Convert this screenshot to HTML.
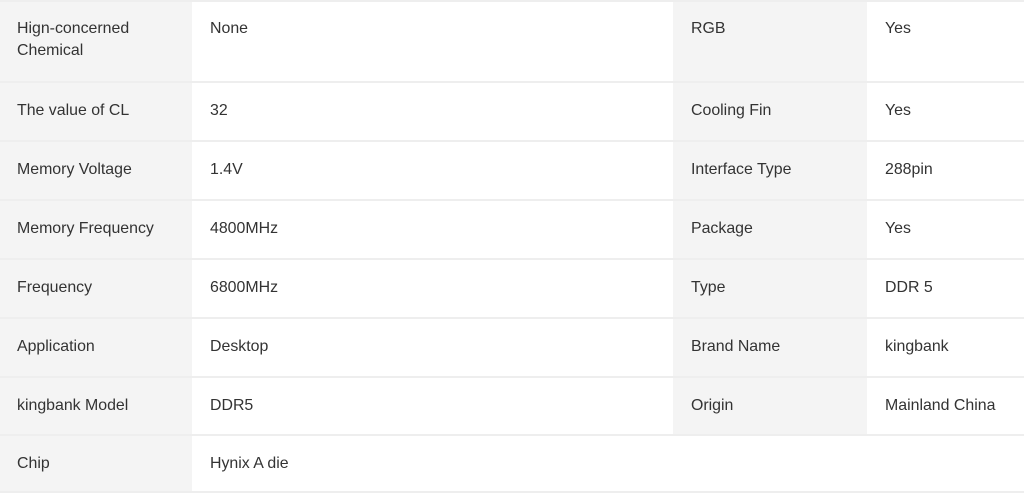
<!DOCTYPE html>
<html><head><style>
body{margin:0;background:#fff;font-family:"Liberation Sans",sans-serif;font-size:15.9px;color:#333}
.r{position:absolute;left:0;width:1024px;border-bottom:2px solid #eee;box-sizing:border-box}
.c{position:absolute;top:0;bottom:0;padding:17px 0 0 17px;line-height:22px;box-sizing:border-box}
.l{background:#f4f4f4}
.a{left:0;width:192px}.b{left:192px;width:481px;padding-left:18px}.cc{left:673px;width:194px;padding-left:18px}.d{left:867px;width:157px;padding-left:18px}
</style></head><body>
<div style="position:absolute;left:0;top:0;width:1024px;height:2px;background:#eee"></div>
<div class="r" style="top:2px;height:81px"><div class="c a l" style="padding-top:16px">Hign-concerned<br>Chemical</div><div class="c b" style="padding-top:16px">None</div><div class="c cc l" style="padding-top:16px">RGB</div><div class="c d" style="padding-top:16px">Yes</div></div>
<div class="r" style="top:83px;height:59px"><div class="c a l">The value of CL</div><div class="c b">32</div><div class="c cc l">Cooling Fin</div><div class="c d">Yes</div></div>
<div class="r" style="top:142px;height:59px"><div class="c a l">Memory Voltage</div><div class="c b">1.4V</div><div class="c cc l">Interface Type</div><div class="c d">288pin</div></div>
<div class="r" style="top:201px;height:59px"><div class="c a l">Memory Frequency</div><div class="c b">4800MHz</div><div class="c cc l">Package</div><div class="c d">Yes</div></div>
<div class="r" style="top:260px;height:59px"><div class="c a l">Frequency</div><div class="c b">6800MHz</div><div class="c cc l">Type</div><div class="c d">DDR 5</div></div>
<div class="r" style="top:319px;height:59px"><div class="c a l">Application</div><div class="c b">Desktop</div><div class="c cc l">Brand Name</div><div class="c d">kingbank</div></div>
<div class="r" style="top:378px;height:58px"><div class="c a l">kingbank Model</div><div class="c b">DDR5</div><div class="c cc l">Origin</div><div class="c d">Mainland China</div></div>
<div class="r" style="top:436px;height:57px"><div class="c a l">Chip</div><div class="c b">Hynix A die</div></div>
</body></html>
